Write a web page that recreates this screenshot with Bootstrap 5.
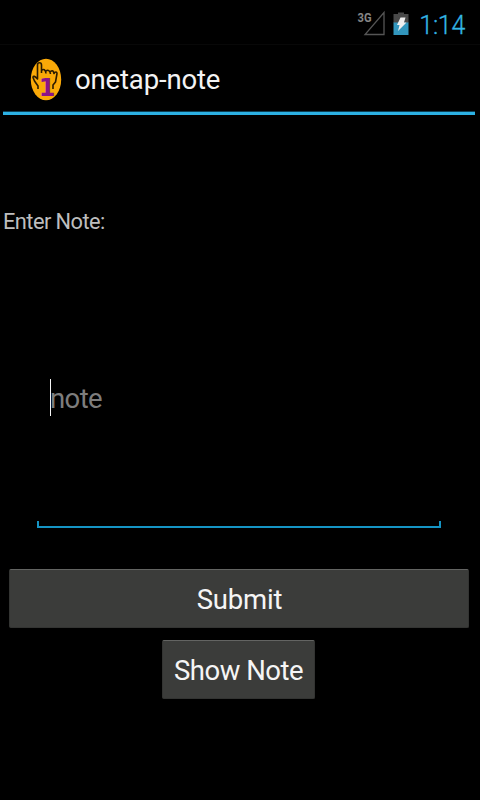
<!DOCTYPE html>
<html lang="en">
<head>
<meta charset="utf-8">
<meta name="viewport" content="width=device-width, initial-scale=1">
<title>onetap-note</title>
<link href="https://cdn.jsdelivr.net/npm/bootstrap@5.3.0/dist/css/bootstrap.min.css" rel="stylesheet">
<style>
body{background:#000;color:#f3f3f3;font-family:Roboto,"Liberation Sans",sans-serif;height:800px;overflow:hidden}
.status-strip{height:45px;padding:4px 15px 0 0;border-bottom:1px solid #080808}
.net-icon{width:30px;height:30px;margin-right:6px}
.batt-icon{width:18px;height:26px;margin-right:9px}
.clock{color:#33b5e5;font-size:25px;font-weight:300;line-height:43px;width:46px;letter-spacing:-.3px;padding-top:2px;-webkit-text-stroke:.3px #33b5e5}
.title-strip{height:70px;margin:0 5px 0 3px;padding:2px 0 0 27px;border-bottom:3px solid #2cb1e4;box-shadow:inset 0 -1px #0d3f54}
.app-icon{width:32px;height:44px;margin-right:13px}
.app-title{font-size:27.5px;line-height:36px;font-weight:400;letter-spacing:-.15px}
.note-label{font-size:21.8px;line-height:28px;color:#bebebe;margin:93px 0 0 3px;letter-spacing:-.55px}
.note-box{margin:134px 39px 0 37px;height:158px}
.note-input,.note-input:focus{background:transparent;border:0;box-shadow:none;resize:none;height:150px;padding:9px 0 0 13px;font-size:27.5px;line-height:40px;color:#fff;overflow:hidden;letter-spacing:-.6px}
.note-input::placeholder{color:#7d7d7d;opacity:1}
.caret{left:13px;top:9px;width:1px;height:37px;background:#f5f5f5}
.underline-mark{height:7px;border:2px solid #1594c4;border-top:0}
.holo,.holo:hover{background:#3b3c3a;color:#f5f5f5;border:1px solid #333432;border-top-color:#636462;border-radius:2px;font-size:27.5px;letter-spacing:-.5px;line-height:36px;height:59px;padding:2px 0 0}
.submit{margin:41px 11px 0 9px;padding-left:1px!important;letter-spacing:-.2px}
.show-note{width:153px;margin:12px 0 0 162px}
</style>
</head>
<body>
<header class="status-strip d-flex align-items-center justify-content-end">
  <svg class="net-icon" viewBox="0 0 30 30"><text x="1.500" y="12.500" font-family="Roboto,sans-serif" font-weight="700" font-size="12.500" textLength="14" lengthAdjust="spacingAndGlyphs" fill="#858585">3G</text><path d="M28 3.500V25.500H9Z" fill="none" stroke="#555" stroke-width="1.3"/></svg>
  <svg class="batt-icon" viewBox="0 0 18 26"><path d="M1.500 3H6V1.500h6V3h4.500v9h-15z" fill="#484848"/><path d="M1.500 11.500h15V24h-15z" fill="#3296bd"/><path d="M8.500 6.500h5l-1.500 5h2.500L6 20l1.500-6H5z" fill="#eee"/></svg>
  <div class="clock text-end text-nowrap">1:14</div>
</header>
<nav class="title-strip d-flex align-items-center">
  <svg class="app-icon" viewBox="0 0 32 44"><ellipse cx="16" cy="21.500" rx="15.2" ry="20.8" fill="#faa908"/><path d="M8 31V28L4.500 23 3 19.500c0-2 2-1.500 4.500 1.500V7c0-3 4-3 4 0v8M11.500 12.500c2-2 4-1 4.500 3M16 13c2-1.500 4-.5 4.500 3M20.500 13.500c2-1.500 3-.5 3.500 2 1.500-2.500 3-1.500 3 0L25.500 24 23 27v4" fill="none" stroke="#2b1b00" stroke-width="1.6" stroke-linejoin="round"/><text x="8.800" y="37.500" font-family="DejaVu Sans" font-weight="700" font-size="24" fill="#8a1488">1</text></svg>
  <h1 class="app-title mb-0">onetap-note</h1>
</nav>
<main class="d-flex flex-column">
  <label class="note-label" for="note">Enter Note:</label>
  <div class="note-box position-relative d-flex flex-column justify-content-between">
    <textarea id="note" class="note-input form-control" placeholder="note"></textarea>
    <span class="caret position-absolute"></span>
    <div class="underline-mark"></div>
  </div>
  <button class="btn holo submit" type="button">Submit</button>
  <button class="btn holo show-note" type="button">Show Note</button>
</main>
<script src="https://cdn.jsdelivr.net/npm/bootstrap@5.3.0/dist/js/bootstrap.bundle.min.js"></script>
</body>
</html>
